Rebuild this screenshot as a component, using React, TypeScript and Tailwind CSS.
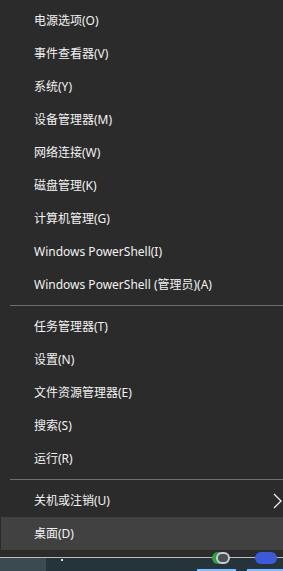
import React from 'react';

const groups = [
  [
    '电源选项(O)',
    '事件查看器(V)',
    '系统(Y)',
    '设备管理器(M)',
    '网络连接(W)',
    '磁盘管理(K)',
    '计算机管理(G)',
    'Windows PowerShell(I)',
    'Windows PowerShell (管理员)(A)',
  ],
  ['任务管理器(T)', '设置(N)', '文件资源管理器(E)', '搜索(S)', '运行(R)'],
];

function Row({ label, active, arrow }: { label: string; active?: boolean; arrow?: boolean }) {
  return (
    <div
      className={`relative flex h-[33px] items-center pl-[33px] text-[12px] text-[#f2f2f2] ${
        active ? 'bg-[#414141]' : ''
      }`}
    >
      <span className="whitespace-nowrap leading-none">{label}</span>
      {arrow && (
        <svg className="absolute right-[0px] top-[9px]" width="10" height="16" viewBox="0 0 10 16">
          <path d="M1 1 L8 8 L1 15" fill="none" stroke="#f0f0f0" strokeWidth="1.3" />
        </svg>
      )}
    </div>
  );
}

function Sep() {
  return (
    <div className="flex h-[9px] items-center pl-[9px]">
      <div className="h-px w-full bg-[#6e6e6e]" />
    </div>
  );
}

export default function App() {
  return (
    <div
      className="flex h-[571px] w-[283px] flex-col overflow-hidden bg-[#2b2b2b]"
      style={{ fontFamily: '"Noto Sans", "Noto Sans CJK SC", sans-serif' }}
    >
      <div className="flex-1 pt-[4px] pl-px">
        {groups[0].map((l) => (
          <Row key={l} label={l} />
        ))}
        <Sep />
        {groups[1].map((l) => (
          <Row key={l} label={l} />
        ))}
        <Sep />
        <Row label="关机或注销(U)" arrow />
        <Row label="桌面(D)" active />
        <div className="h-[7px]" />
      </div>
      <div className="h-px bg-[#bdbdb5]" />
      <div className="relative flex h-[13px]">
        <div className="w-[46px] bg-[#3a4a50]" />
        <div className="flex-1 bg-[#24343a]" />
        <div className="absolute left-[61px] top-[1px] h-[2px] w-[2px] bg-[#dcdcdc]" />
        <div className="absolute left-[212px] top-[-6px] h-[12px] w-[16px] rounded-full bg-[#2ea043]" />
        <div className="absolute left-[216px] top-[-6px] h-[12px] w-[14px] rounded-full border-2 border-[#c8ccd2] bg-[#4a5058]" />
        <div className="absolute left-[255px] top-[-6px] h-[12px] w-[22px] rounded-full bg-[#3d5bd8]" />
        <div className="absolute bottom-0 left-[197px] h-[2px] w-[39px] bg-[#7fbfff]" />
        <div className="absolute bottom-0 left-[247px] h-[2px] w-[36px] bg-[#7fbfff]" />
      </div>
    </div>
  );
}
